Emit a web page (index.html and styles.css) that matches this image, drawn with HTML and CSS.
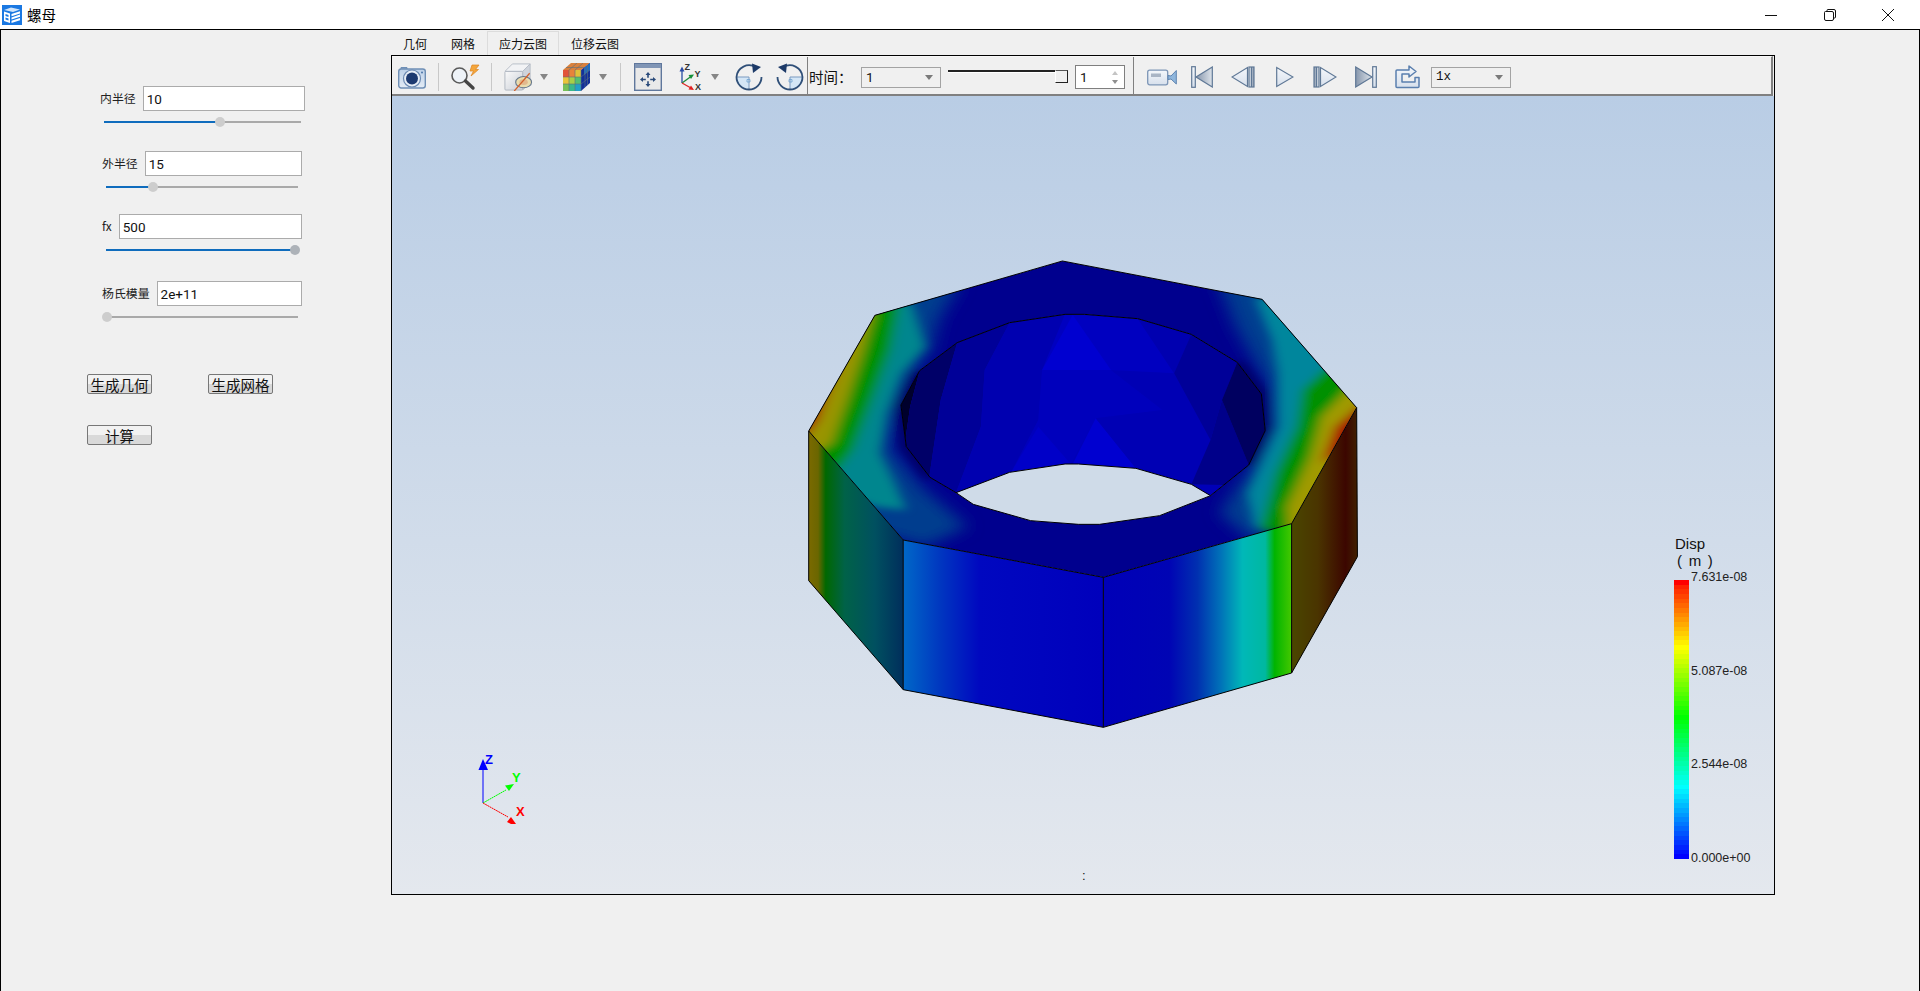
FILE: index.html
```html
<!DOCTYPE html>
<html lang="zh">
<head>
<meta charset="utf-8">
<title>螺母</title>
<link rel="stylesheet" href="styles.css">
</head>
<body>
<svg class="defs" aria-hidden="true">
  <defs>
    <linearGradient id="steelH" x1="0" y1="0" x2="1" y2="0"><stop offset="0" stop-color="#8696ac"/><stop offset="1" stop-color="#dde3ea"/></linearGradient>
    <linearGradient id="steelR" x1="1" y1="0" x2="0" y2="0"><stop offset="0" stop-color="#8696ac"/><stop offset="1" stop-color="#dde3ea"/></linearGradient>
    <linearGradient id="pale" x1="0" y1="0" x2="0" y2="1"><stop offset="0" stop-color="#f4f7fb"/><stop offset="1" stop-color="#d7e0ec"/></linearGradient>
    <linearGradient id="camBody" x1="0" y1="0" x2="0" y2="1"><stop offset="0" stop-color="#bcd0e8"/><stop offset="1" stop-color="#e4ecf5"/></linearGradient>
    <linearGradient id="cubeF" x1="0" y1="0" x2="1" y2="1"><stop offset="0" stop-color="#fafafa"/><stop offset="1" stop-color="#c9ced6"/></linearGradient>
    <linearGradient id="faceLL" gradientUnits="userSpaceOnUse" x1="75" y1="0" x2="322" y2="0">
      <stop offset="0" stop-color="#7b6a00"/><stop offset=".1" stop-color="#6a6600"/><stop offset=".18" stop-color="#006800"/><stop offset=".38" stop-color="#006248"/><stop offset=".7" stop-color="#005060"/><stop offset="1" stop-color="#002e5c"/>
    </linearGradient>
    <linearGradient id="faceFL" gradientUnits="userSpaceOnUse" x1="322" y1="0" x2="845" y2="0">
      <stop offset="0" stop-color="#0068c8"/><stop offset=".18" stop-color="#0038c0"/><stop offset=".38" stop-color="#0008c0"/><stop offset="1" stop-color="#0000bc"/>
    </linearGradient>
    <linearGradient id="faceFR" gradientUnits="userSpaceOnUse" x1="845" y1="0" x2="1337" y2="0">
      <stop offset="0" stop-color="#0000b8"/><stop offset=".35" stop-color="#0004b4"/><stop offset=".5" stop-color="#0030b0"/><stop offset=".62" stop-color="#0070b8"/><stop offset=".74" stop-color="#00b8b8"/><stop offset=".86" stop-color="#00b8a0"/><stop offset=".91" stop-color="#00b400"/><stop offset="1" stop-color="#44c800"/>
    </linearGradient>
    <linearGradient id="faceRR" gradientUnits="userSpaceOnUse" x1="1337" y1="0" x2="1509" y2="0">
      <stop offset="0" stop-color="#4a4600"/><stop offset=".4" stop-color="#4a3400"/><stop offset=".82" stop-color="#3c0600"/><stop offset="1" stop-color="#402000"/>
    </linearGradient>
    <filter id="soft" x="-30%" y="-30%" width="160%" height="160%"><feGaussianBlur stdDeviation="15 11"/></filter>
    <filter id="softer" x="-30%" y="-30%" width="160%" height="160%"><feGaussianBlur stdDeviation="24 20"/></filter>
    <clipPath id="topClip"><path clip-rule="evenodd" d="M738 63L1260 178L1507 503L1337 851L845 1012L322 900L75 573L248 226ZM745 223L600 248L463 308L365 392L316 495L330 620L392 712L460 758L505 793L655 842L780 853L835 853L992 827L1125 767L1225 675L1268 572L1258 462L1195 367L1075 283L935 236L795 223Z"/></clipPath>
    <clipPath id="holeClip"><path d="M745 223L600 248L463 308L365 392L316 495L330 620L392 712L460 758L505 793L655 842L780 853L835 853L992 827L1125 767L1225 675L1268 572L1258 462L1195 367L1075 283L935 236L795 223Z"/></clipPath>
  </defs>
</svg>

<div class="window">
  <header class="titlebar">
    <svg class="app-icon" viewBox="0 0 20 20">
      <rect width="20" height="20" fill="#1a78e2"/>
      <path d="M2 5L9 2.500L18 4.500L11 7Z" fill="#cfe4fb"/>
      <path d="M2 6.500L8 8.500V18L2 16Z" fill="#fff"/>
      <path d="M3.500 9L6.500 10V12L3.500 11ZM3.500 12.500L6.500 13.500V15.500L3.500 14.500Z" fill="#1a78e2"/>
      <path d="M9.500 9L18 6.200V8.400L9.500 11.200ZM9.500 12.400L18 9.600V11.800L9.500 14.600ZM9.500 15.800L18 13V15.200L9.500 18Z" fill="#fff"/>
    </svg>
    <span class="app-title">螺母</span>
    <div class="win-controls">
      <svg class="win-btn" viewBox="0 0 12 12"><path d="M0 6.500H12" stroke="#111" fill="none"/></svg>
      <svg class="win-btn" viewBox="0 0 12 12"><path d="M3 2.500V1.500Q3 .5 4 .5H10Q11.500 .5 11.500 2V8Q11.500 9 10.500 9H9.500M1.500 2.500H8Q9.500 2.500 9.500 4V10Q9.500 11.500 8 11.500H2Q.5 11.500 .5 10V3.500Q.5 2.500 1.500 2.500Z" stroke="#111" fill="none"/></svg>
      <svg class="win-btn" viewBox="0 0 12 12"><path d="M0 0L12 12M12 0L0 12" stroke="#111" fill="none"/></svg>
    </div>
  </header>

  <main class="client">
    <aside class="panel">
      <section class="param param-1">
        <div class="param-row"><label class="param-label">内半径</label><div class="field">10</div></div>
        <div class="slider"><div class="slider-fill fill-60"></div><div class="thumb thumb-60"></div></div>
      </section>
      <section class="param param-2">
        <div class="param-row"><label class="param-label">外半径</label><div class="field">15</div></div>
        <div class="slider"><div class="slider-fill fill-24"></div><div class="thumb thumb-24"></div></div>
      </section>
      <section class="param param-3">
        <div class="param-row"><label class="param-label">fx</label><div class="field">500</div></div>
        <div class="slider"><div class="slider-fill fill-98"></div><div class="thumb thumb-98"></div></div>
      </section>
      <section class="param param-4">
        <div class="param-row"><label class="param-label">杨氏模量</label><div class="field">2e+11</div></div>
        <div class="slider"><div class="thumb thumb-0"></div></div>
      </section>
      <div class="actions">
        <div class="action-row">
          <button class="btn">生成几何</button>
          <button class="btn">生成网格</button>
        </div>
        <div class="action-row">
          <button class="btn">计算</button>
        </div>
      </div>
    </aside>

    <div class="workspace">
      <nav class="tabs">
        <span class="tab">几何</span>
        <span class="tab">网格</span>
        <span class="tab tab-active">应力云图</span>
        <span class="tab">位移云图</span>
      </nav>
      <div class="viewer">
        <div class="toolbar">
          <svg class="ic m6 w28" viewBox="0 0 28 24">
            <path d="M3 4V2.500H9V4" fill="#8fa8c8" stroke="#6f8fb5"/>
            <rect x=".7" y="4" width="26.600" height="19" rx="2.500" fill="url(#camBody)" stroke="#6f8fb5" stroke-width="1.400"/>
            <circle cx="14" cy="13.500" r="8.500" fill="#e8eef6" stroke="#6c8ab2" stroke-width="1.200"/>
            <circle cx="14" cy="13.500" r="6" fill="#1d3a70"/>
            <circle cx="24" cy="7.500" r="1" fill="#4c76a8"/>
          </svg>
          <i class="sep m12"></i>
          <svg class="ic m11 w30" viewBox="0 0 30 28">
            <path d="M22 2H29L25.500 6.500H28.500L21 13L23.500 8H20Z" fill="#f4a63c" stroke="#dd8420" stroke-width=".7"/>
            <circle cx="9.500" cy="12.500" r="7.500" fill="#eef3f8" stroke="#5a5a5a" stroke-width="1.600"/>
            <path d="M15.500 18L23 25" stroke="#454545" stroke-width="3.400" stroke-linecap="round"/>
          </svg>
          <i class="sep m11"></i>
          <svg class="ic m11 w30" viewBox="0 0 30 30">
            <path d="M1 9L9 1H28L20 9Z" fill="#f2f3f5" stroke="#b6bcc6"/>
            <path d="M20 9L28 1V21L20 29Z" fill="#cfd4dc" stroke="#b6bcc6"/>
            <rect x="1" y="9" width="19" height="20" rx="1" fill="url(#cubeF)" stroke="#aeb5c0"/>
            <ellipse cx="21" cy="20.500" rx="8.500" ry="6" fill="#e9dcae" stroke="#66788c" stroke-width="1.200"/>
            <ellipse cx="21" cy="20.500" rx="4.500" ry="3" fill="#e2b98e"/>
            <path d="M11 30L27.500 11" stroke="#d2602a" stroke-width="1.300"/>
          </svg>
          <i class="caret m7"></i>
          <svg class="ic m15 w27" viewBox="0 0 27 28">
            <path d="M0 7L8 0H27L18 7Z" fill="#d9803c"/>
            <path d="M18 7L27 0V20L18 28Z" fill="#12309a"/>
            <path d="M21 5L27 0V7L21 12Z" fill="#1f6cc0"/>
            <path d="M0 7H6V14H0Z" fill="#e2533a"/><path d="M6 7H12V14H6Z" fill="#e8843a"/><path d="M12 7H18V14H12Z" fill="#e0c23a"/>
            <path d="M0 14H6V21H0Z" fill="#e8c43a"/><path d="M6 14H12V21H6Z" fill="#a8cf48"/><path d="M12 14H18V21H12Z" fill="#54c070"/>
            <path d="M0 21H6V28H0Z" fill="#76c058"/><path d="M6 21H12V28H6Z" fill="#38b98c"/><path d="M12 21H18V28H12Z" fill="#22a0c8"/>
            <path d="M6 7V28M12 7V28M0 14H18M0 21H18M6 7L14 0M12 7L20 0M3 4.500H21M18 7V28M22 4V24M24.500 2V22M18 14L27 7M18 21L27 14" stroke="#5b6f7c" stroke-width=".6" fill="none"/>
          </svg>
          <i class="caret m9"></i>
          <i class="sep m13"></i>
          <svg class="ic m13 w28" viewBox="0 0 28 28">
            <rect x=".7" y=".7" width="26.600" height="26.600" fill="#e9e9e9" stroke="#5f779c" stroke-width="1.400"/>
            <rect x="1" y="1" width="26" height="4" fill="#8095b5"/>
            <path d="M14 9L11.500 12H13.200V14.800H14.800V12H16.500ZM14 24L11.500 21H13.200V18.200H14.800V21H16.500ZM6 16.500L9 14V15.700H11.800V17.300H9V19ZM22 16.500L19 14V15.700H16.200V17.300H19V19Z" fill="#2a4a7a"/>
          </svg>
          <svg class="ic m16 w30" viewBox="0 0 30 28">
            <path d="M4 20V7" stroke="#3558a8" stroke-width="1.400"/><path d="M4 3.500L1.500 8.500H6.500Z" fill="#2a4ca6"/>
            <path d="M4 20L13 13.500" stroke="#1d8a3c" stroke-width="1.400"/><path d="M16 11.500L10.500 12L13 16Z" fill="#159038"/>
            <path d="M4 20L13 25" stroke="#dd2a2a" stroke-width="1.400"/><path d="M16 27L10.500 26.500L13 22.500Z" fill="#e22020"/>
            <text x="6.500" y="7" class="axis-mini">Z</text><text x="16.500" y="14" class="axis-mini">Y</text><text x="17" y="27" class="axis-mini">X</text>
          </svg>
          <i class="caret m3"></i>
          <svg class="ic m16 w28" viewBox="0 0 28 28">
            <path d="M14 14H1.500A12.500 12.500 0 0 0 14 26.500Z" fill="#d4e6f6"/>
            <path d="M1.500 14H14V26.500" fill="none" stroke="#7b9ac0"/>
            <path d="M12 16.500H15V19H12Z" fill="none" stroke="#6fa2d0" stroke-width=".8"/>
            <path d="M21 4.500A12.500 12.500 0 0 0 1.500 14A12.500 12.500 0 0 0 26.500 14" fill="none" stroke="#2f4f78" stroke-width="1.800"/>
            <path d="M17 .5L26 4L18 10Z" fill="#1d3a68"/>
          </svg>
          <svg class="ic m13 w28 flip" viewBox="0 0 28 28">
            <path d="M14 14H1.500A12.500 12.500 0 0 0 14 26.500Z" fill="#d4e6f6"/>
            <path d="M1.500 14H14V26.500" fill="none" stroke="#7b9ac0"/>
            <path d="M12 16.500H15V19H12Z" fill="none" stroke="#6fa2d0" stroke-width=".8"/>
            <path d="M21 4.500A12.500 12.500 0 0 0 1.500 14A12.500 12.500 0 0 0 26.500 14" fill="none" stroke="#2f4f78" stroke-width="1.800"/>
            <path d="M17 .5L26 4L18 10Z" fill="#1d3a68"/>
          </svg>
          <i class="sep-dark m3"></i>
          <span class="time-label">时间：</span>
          <div class="combo"><span>1</span><i class="mini-caret"></i></div>
          <div class="time-slider m7"><i class="time-handle"></i></div>
          <div class="spin m7"><span>1</span><span class="spin-arrows"><i class="spin-up"></i><i class="spin-down"></i></span></div>
          <i class="sep-dark m8"></i>
          <svg class="ic m13 w30" viewBox="0 0 30 17">
            <rect x=".7" y="1.700" width="20" height="14.600" rx="2" fill="url(#pale)" stroke="#7c95b6" stroke-width="1.300"/>
            <rect x="4" y="5" width="10" height="3.500" fill="#a9b5c5"/>
            <path d="M21 7L24 7.500L29.300 2V15.500L24 10.500L21 11Z" fill="#8fb6dc" stroke="#5f84b0"/>
          </svg>
          <svg class="ic m14 w22" viewBox="0 0 22 22">
            <rect x=".7" y=".7" width="3.600" height="20.600" fill="url(#pale)" stroke="#5f7896" stroke-width="1.200"/>
            <path d="M21.300 1V21L5 11Z" fill="url(#steelH)" stroke="#5f7896" stroke-width="1.200"/>
          </svg>
          <svg class="ic m18 w24" viewBox="0 0 24 22">
            <path d="M16.500 1.500V20.500L1 11Z" fill="url(#pale)" stroke="#5f7896" stroke-width="1.200"/>
            <rect x="18" y="1" width="5" height="20" fill="url(#steelR)" stroke="#5f7896" stroke-width="1.200"/>
            <path d="M20.500 1V21" stroke="#5f7896"/>
          </svg>
          <svg class="ic m21 w18" viewBox="0 0 18 22">
            <path d="M.7 1.500V20.500L17 11Z" fill="url(#pale)" stroke="#5f7896" stroke-width="1.200"/>
          </svg>
          <svg class="ic m19 w24" viewBox="0 0 24 22">
            <path d="M7.500 1.500V20.500L23 11Z" fill="url(#pale)" stroke="#5f7896" stroke-width="1.200"/>
            <rect x="1" y="1" width="5" height="20" fill="url(#steelH)" stroke="#5f7896" stroke-width="1.200"/>
            <path d="M3.500 1V21" stroke="#5f7896"/>
          </svg>
          <svg class="ic m18 w22" viewBox="0 0 22 22">
            <path d="M.7 1V21L17 11Z" fill="url(#steelH)" stroke="#5f7896" stroke-width="1.200"/>
            <rect x="17.700" y=".7" width="3.600" height="20.600" fill="url(#pale)" stroke="#5f7896" stroke-width="1.200"/>
          </svg>
          <svg class="ic m18 w25" viewBox="0 0 25 24">
            <path d="M14 1L21 6.500L14 12V9H7V17H20V12.500H24V21.500Q24 22.500 23 22.500H2Q1 22.500 1 21.500V6Q1 5 2 5H14Z" fill="url(#pale)" stroke="#5a7fae" stroke-width="1.500" stroke-linejoin="round"/>
          </svg>
          <div class="combo combo-mono m11"><span>1x</span><i class="mini-caret"></i></div>
        </div>

        <div class="viewport">
          <svg class="nut" viewBox="0 0 1568 1500" preserveAspectRatio="none">
            <polygon points="75,573 322,900 322,1349 75,1022" fill="url(#faceLL)"/>
            <polygon points="322,900 845,1012 845,1462 322,1349" fill="url(#faceFL)"/>
            <polygon points="845,1012 1337,851 1337,1299 845,1462" fill="url(#faceFR)"/>
            <polygon points="1337,851 1507,503 1509,950 1337,1299" fill="url(#faceRR)"/>

            <g clip-path="url(#topClip)">
              <polygon points="738,63 1260,178 1507,503 1337,851 845,1012 322,900 75,573 248,226" fill="#00008e"/>
              <g filter="url(#softer)">
                <polygon fill="#003c8e" points="0,100 470,130 415,240 395,330 315,450 290,620 370,740 490,860 380,920 0,800"/>
                <polygon fill="#003c90" points="1140,110 1190,260 1275,440 1290,570 1205,720 1150,820 1230,900 1568,900 1568,120"/>
              </g>
              <g filter="url(#soft)">
                <polygon fill="#00868e" points="0,100 345,190 380,320 320,400 280,520 262,640 300,730 330,810 250,800 0,700"/>
                <polygon fill="#009000" points="0,100 312,190 288,330 240,480 190,630 150,690 0,700"/>
                <polygon fill="#999400" points="0,100 245,220 215,340 175,480 135,610 0,700"/>
                <polygon fill="#a81000" points="0,300 170,330 130,440 100,540 60,600"/>
                <polygon fill="#00869c" points="1240,170 1285,300 1300,400 1300,560 1220,760 1240,860 1568,900 1568,200"/>
                <polygon fill="#009000" points="1430,380 1365,450 1350,560 1295,700 1255,870 1568,900 1568,400"/>
                <polygon fill="#a09a00" points="1490,440 1415,530 1385,650 1325,800 1330,900 1568,900 1568,500"/>
                <polygon fill="#a81000" points="1520,490 1450,560 1415,670 1470,640 1568,600"/>
                <polyline points="365,392 316,495 330,620 392,712" fill="none" stroke="#00005e" stroke-width="26"/>
                <polyline points="1195,367 1258,462 1268,572 1225,675" fill="none" stroke="#00005e" stroke-width="26"/>
              </g>
            </g>

            <path d="M745 223L600 248L463 308L365 392L316 495L330 620L392 712L460 758L505 793L655 842L780 853L835 853L992 827L1125 767L1225 675L1268 572L1258 462L1195 367L1075 283L935 236L795 223Z" fill="#0000b8"/>
            <g clip-path="url(#holeClip)">
              <polygon fill="#00002c" points="316,495 365,392 340,500 325,620 330,640"/>
              <polygon fill="#000068" points="365,392 463,308 420,480 390,712 325,620 340,500"/>
              <polygon fill="#000098" points="463,308 600,248 535,390 525,560 460,758 390,712 420,480"/>
              <polygon fill="#0000b0" points="600,248 745,223 685,390 675,540 605,695 460,758 525,560 535,390"/>
              <polygon fill="#0000c0" points="745,223 935,236 1030,400 685,390"/>
              <polygon fill="#0000d0" points="765,225 865,390 685,390"/>
              <polygon fill="#0000bc" points="685,390 865,390 1000,510 825,535 760,672 605,695 675,540"/>
              <polygon fill="#0000d0" points="825,535 930,685 765,672"/>
              <polygon fill="#0000c8" points="675,560 760,672 605,695"/>
              <polygon fill="#0000b4" points="865,390 1030,400 1125,600 1075,733 930,685 825,535 1000,510"/>
              <polygon fill="#0000b0" points="935,236 1075,283 1030,400"/>
              <polygon fill="#000098" points="1075,283 1195,367 1155,480 1125,600 1030,400"/>
              <polygon fill="#00008a" points="1155,480 1225,675 1160,735 1075,733 1125,600"/>
              <polygon fill="#000060" points="1195,367 1258,462 1268,572 1225,675 1155,480"/>
              <polygon fill="#cfdbe8" points="460,758 600,697 745,672 780,672 930,685 1075,733 1125,767 1125,900 460,900"/>
            </g>

            <g class="nut-edges">
              <polyline points="738,63 1260,178 1507,503 1337,851 845,1012 322,900 75,573 248,226 738,63"/>
              <polyline points="745,223 600,248 463,308 365,392 316,495 330,620 392,712 460,758 505,793 655,842 780,853 835,853 992,827 1125,767 1225,675 1268,572 1258,462 1195,367 1075,283 935,236 795,223 745,223"/>
              <polyline points="460,758 600,697 745,672 780,672 930,685 1075,733 1125,767"/>
              <polyline points="75,573 75,1022 322,1349 845,1462 1337,1299 1509,950 1507,503"/>
              <path d="M322 900V1349M845 1012V1462M1337 851V1299"/>
            </g>
          </svg>

          <svg class="triad" viewBox="470 750 60 80">
            <path d="M483 803V768" stroke="#0000ff" stroke-width="1"/>
            <path d="M483 759L478.500 770H488Z" fill="#0000ff"/>
            <path d="M483 803L506 790" stroke="#00ff00" stroke-width="1" stroke-dasharray="2 .5"/>
            <path d="M514 784L505 785.500L509 791Z" fill="#00ff00"/>
            <path d="M483 803L508 817" stroke="#ff0000" stroke-width="1" stroke-dasharray="2 .5"/>
            <path d="M511 817L516 824H511L507 822Z" fill="#ff0000"/>
            <text x="485" y="764" class="t-z">Z</text>
            <text x="512" y="782" class="t-y">Y</text>
            <text x="516" y="816" class="t-x">X</text>
          </svg>

          <div class="legend">
            <div class="legend-title">Disp<br><span class="legend-unit">( m )</span></div>
            <div class="legend-body">
              <div class="legend-bar"></div>
              <div class="legend-ticks">
                <span>7.631e-08</span>
                <span>5.087e-08</span>
                <span>2.544e-08</span>
                <span>0.000e+00</span>
              </div>
            </div>
          </div>
          <span class="colon">:</span>
        </div>
      </div>
    </div>
  </main>
</div>
</body>
</html>
```

FILE: styles.css
```css
* { box-sizing: border-box; }
html, body { margin: 0; height: 100%; overflow: hidden; background: #fff; }
body { font-family: "Noto Sans CJK SC", "Liberation Sans", sans-serif; color: #111; }
.defs { position: absolute; width: 0; height: 0; }

.window { display: flex; flex-direction: column; width: 1920px; height: 991px; }

.titlebar { display: flex; align-items: center; height: 29px; flex: none; background: #fff; padding-left: 2px; }
.app-icon { width: 20px; height: 20px; flex: none; }
.app-title { margin-left: 5px; font-size: 14.5px; line-height: 20px; color: #000; }
.win-controls { display: flex; align-items: center; gap: 46.5px; margin-left: auto; padding-right: 26px; }
.win-btn { width: 12px; height: 12px; display: block; }

.client { flex: 1; display: flex; min-height: 0; background: #f0f0f0; border: 1px solid #000; border-bottom: 0; }

.panel { width: 390px; flex: none; display: flex; flex-direction: column; padding-top: 56px; }
.param-row { display: flex; align-items: center; gap: 7px; height: 25px; }
.param-label { margin-bottom: 1px; font-size: 11.9px; line-height: 24px; color: #222; white-space: nowrap; }
.field { flex: 1; height: 25px; border: 1px solid #ababab; background: #fff; padding-left: 3px; font-family: Roboto, "Liberation Sans", sans-serif; font-size: 13.5px; line-height: 24px; color: #111; }
.param-1 { margin-left: 99px; width: 205px; }
.param-2 { margin-left: 101px; width: 200px; margin-top: 28px; }
.param-3 { margin-left: 101px; width: 200px; margin-top: 26px; }
.param-4 { margin-left: 101px; width: 200px; margin-top: 30px; }

.slider { position: relative; height: 2px; margin: 10px 4px 0 4px; background: #a9a9a9; }
.slider-fill { height: 2px; background: #0f6cbd; }
.fill-60 { width: 59%; }
.fill-24 { width: 24%; }
.fill-98 { width: 98.5%; }
.thumb { position: absolute; top: -4px; width: 10px; height: 10px; margin-left: -5px; border-radius: 50%; background: #cdcdcd; }
.thumb-60 { left: 59%; }
.thumb-24 { left: 24.5%; }
.thumb-98 { left: 98.5%; background: #adb2b8; }
.thumb-0 { left: 0; margin-left: -4px; }

.actions { display: flex; flex-direction: column; gap: 31px; margin: 56px 0 0 86px; }
.action-row { display: flex; gap: 56px; }
.btn { width: 65px; height: 20px; padding: 0; border: 1px solid #777; border-radius: 2px; background: linear-gradient(#f2f2f2 0 48%, #d9d9d9 48% 100%); font-family: "Noto Sans CJK SC", sans-serif; font-size: 14.5px; line-height: 17px; color: #111; }

.workspace { width: 1384px; flex: none; display: flex; flex-direction: column; height: 865px; }
.tabs { display: flex; height: 25px; flex: none; padding-top: 1px; }
.tab { padding: 0 12px; font-size: 12px; line-height: 26px; color: #111; white-space: nowrap; }
.tab-active { width: 72px; padding: 0 11px; border: 1px solid #dcdcdc; border-bottom: 0; background: #f0f0f0; line-height: 24px; }

.viewer { flex: 1; display: flex; flex-direction: column; min-height: 0; border: 1px solid #000; }

.toolbar { display: flex; align-items: center; height: 40px; flex: none; padding-top: 3px; background: #f0f0f0; border-top: 1px solid #f7f7f7; border-bottom: 2px solid #808080; border-right: 2px solid #808080; margin-right: 1px; }
.ic { display: block; flex: none; }
.w18 { width: 18px; height: 22px; }
.w22 { width: 22px; height: 22px; }
.w24 { width: 24px; height: 22px; }
.w25 { width: 25px; height: 24px; }
.w27 { width: 27px; height: 28px; }
.w28 { width: 28px; height: 28px; }
.w30 { width: 30px; height: 28px; }
.flip { transform: scaleX(-1); }
.m3 { margin-left: 3px; }
.m6 { margin-left: 6px; }
.m7 { margin-left: 7px; }
.m8 { margin-left: 8px; }
.m9 { margin-left: 9px; }
.m11 { margin-left: 11px; }
.m12 { margin-left: 12px; }
.m13 { margin-left: 13px; }
.m14 { margin-left: 14px; }
.m15 { margin-left: 15px; }
.m16 { margin-left: 16px; }
.m18 { margin-left: 18px; }
.m19 { margin-left: 19px; }
.m21 { margin-left: 21px; }
.sep { display: block; flex: none; width: 1px; height: 28px; background: #c8c8c8; }
.sep-dark { display: block; flex: none; align-self: flex-start; width: 1px; height: 37px; background: #808080; margin-top: -3px; }
.caret { display: block; flex: none; width: 0; height: 0; border-left: 4.5px solid transparent; border-right: 4.5px solid transparent; border-top: 6px solid #868686; }
.axis-mini { font-family: "Liberation Sans", sans-serif; font-size: 9px; font-weight: 700; fill: #333; }

.time-label { width: 52px; margin-left: 1px; flex: none; font-size: 14.5px; line-height: 20px; color: #111; white-space: nowrap; }
.combo { display: flex; align-items: center; justify-content: space-between; width: 80px; height: 21px; flex: none; border: 1px solid #a3a3a3; padding: 0 7px 0 4px; font-family: Roboto, sans-serif; font-size: 13.5px; color: #111; }
.combo-mono { font-family: "Liberation Mono", monospace; font-size: 12.5px; }
.mini-caret { display: block; width: 0; height: 0; border-left: 4.5px solid transparent; border-right: 4.5px solid transparent; border-top: 5px solid #7a7a7a; }
.time-slider { position: relative; width: 120px; height: 14px; flex: none; }
.time-slider::before { content: ""; position: absolute; left: 0; right: 0; top: 0; height: 2px; background: #222; box-shadow: 0 1px 0 #fff; }
.time-handle { position: absolute; right: 0; top: 0; width: 13px; height: 13px; border-right: 1px solid #222; border-bottom: 1px solid #222; background: #f0f0f0; border-top: 1px solid #555; border-left: 1px solid #fff; }
.spin { display: flex; align-items: center; justify-content: space-between; width: 50px; height: 24px; flex: none; background: #fff; border: 1px solid #7f7f7f; padding: 0 6px 0 4px; font-family: Roboto, sans-serif; font-size: 13.5px; color: #111; }
.spin-arrows { display: flex; flex-direction: column; gap: 5px; }
.spin-up, .spin-down { display: block; width: 0; height: 0; border-left: 3px solid transparent; border-right: 3px solid transparent; }
.spin-up { border-bottom: 4px solid #c4c4c4; }
.spin-down { border-top: 4px solid #8f8f8f; }

.viewport { position: relative; flex: 1; min-height: 0; overflow: hidden; background: linear-gradient(#b9cde5, #e4e8ee); }
.nut { position: absolute; left: 388px; top: 144px; width: 600px; height: 500px; }
.nut-edges { fill: none; stroke: #000; stroke-width: 1; }
.nut-edges * { vector-effect: non-scaling-stroke; }
.triad { position: absolute; left: 78px; top: 654px; width: 60px; height: 80px; }
.triad text { font-family: "Liberation Sans", sans-serif; font-size: 13px; font-weight: 700; }
.t-z { fill: #0000ff; }
.t-y { fill: #00ff00; }
.t-x { fill: #ff0000; }

.legend { position: absolute; left: 1282px; top: 439px; }
.legend-title { margin-left: 1px; font-family: "Liberation Sans", sans-serif; font-size: 15px; line-height: 17px; height: 34px; color: #111; white-space: pre; }
.legend-unit { display: inline-block; margin-left: 2px; word-spacing: 2.5px; }
.legend-body { display: flex; margin-top: 1px; }
.legend-bar { width: 15px; height: 279px; margin-top: 10px; background: linear-gradient(180deg,
  #f00 0 5px, #f20 0 9px, #f30 0 14px, #f40 0 19px, #f50 0 23px, #f60 0 28px, #f70 0 33px, #f80 0 37px, #f90 0 42px, #fa0 0 47px, #fb0 0 51px, #fc0 0 56px, #fd0 0 60px, #fe0 0 65px, #ff0 0 70px,
  #ef0 0 74px, #df0 0 79px, #cf0 0 84px, #bf0 0 88px, #af0 0 93px, #9f0 0 98px, #8f0 0 102px, #7f0 0 107px, #6f0 0 112px, #5f0 0 116px, #4f0 0 121px, #3f0 0 126px, #2f0 0 130px, #1f0 0 135px, #0f0 0 140px,
  #0f1 0 144px, #0f2 0 149px, #0f3 0 153px, #0f4 0 158px, #0f5 0 163px, #0f6 0 167px, #0f7 0 172px, #0f8 0 177px, #0f9 0 181px, #0fa 0 186px, #0fb 0 191px, #0fc 0 195px, #0fd 0 200px, #0fe 0 205px, #0ff 0 209px,
  #0ef 0 214px, #0df 0 219px, #0cf 0 223px, #0bf 0 228px, #0af 0 233px, #09f 0 237px, #08f 0 242px, #07f 0 246px, #06f 0 251px, #05f 0 256px, #04f 0 260px, #03f 0 265px, #02f 0 270px, #01f 0 274px, #00f 0 279px); }
.legend-ticks { display: flex; flex-direction: column; justify-content: space-between; height: 294px; margin-top: 1px; margin-left: 2px; font-family: "Liberation Sans", sans-serif; font-size: 12.5px; line-height: 13px; color: #222; white-space: nowrap; }
.colon { position: absolute; left: 690px; top: 772px; font-family: "Liberation Sans", sans-serif; font-size: 13px; line-height: 16px; color: #111; }
```
